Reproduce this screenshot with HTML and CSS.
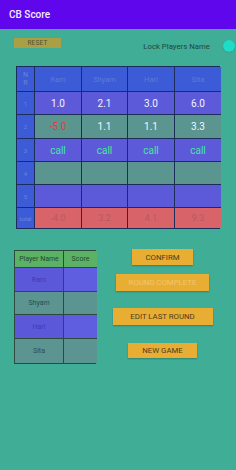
FILE: index.html
```html
<!DOCTYPE html>
<html>
<head>
<meta charset="utf-8">
<link rel="stylesheet" href="styles.css">
</head>
<body>
<div class="appbar">CB Score</div>
<div class="toolbar">
  <div class="reset">RESET</div>
  <div class="lock">
    <span class="lock-label">Lock Players Name</span>
    <span class="switch"><span class="thumb"></span></span>
  </div>
</div>

<div class="score-table">
  <div class="c hd first nr"><span>N</span><span>R</span></div>
  <div class="c hd">Ram</div>
  <div class="c hd">Shyam</div>
  <div class="c hd">Hari</div>
  <div class="c hd">Sita</div>

  <div class="c first num">1</div>
  <div class="c pu val">1.0</div>
  <div class="c pu val">2.1</div>
  <div class="c pu val">3.0</div>
  <div class="c pu val">6.0</div>

  <div class="c first num">2</div>
  <div class="c gr val neg">-5.0</div>
  <div class="c gr val">1.1</div>
  <div class="c gr val">1.1</div>
  <div class="c gr val">3.3</div>

  <div class="c first num">3</div>
  <div class="c pu call">call</div>
  <div class="c pu call">call</div>
  <div class="c pu call">call</div>
  <div class="c pu call">call</div>

  <div class="c first num">4</div>
  <div class="c gr"></div>
  <div class="c gr"></div>
  <div class="c gr"></div>
  <div class="c gr"></div>

  <div class="c first num">5</div>
  <div class="c pu"></div>
  <div class="c pu"></div>
  <div class="c pu"></div>
  <div class="c pu"></div>

  <div class="c first num">total</div>
  <div class="c tot">-4.0</div>
  <div class="c tot">3.2</div>
  <div class="c tot">4.1</div>
  <div class="c tot">9.3</div>
</div>

<div class="lower">
  <div class="player-table">
    <div class="p ph">Player Name</div>
    <div class="p ph">Score</div>
    <div class="p ppu name">Ram</div>
    <div class="p ppu2"></div>
    <div class="p pgr name">Shyam</div>
    <div class="p pgr"></div>
    <div class="p ppu name">Hari</div>
    <div class="p ppu2"></div>
    <div class="p pgr name">Sita</div>
    <div class="p pgr"></div>
  </div>
  <div class="actions">
    <div class="btn confirm">CONFIRM</div>
    <div class="btn disabled round">ROUND COMPLETE</div>
    <div class="btn edit">EDIT LAST ROUND</div>
    <div class="btn newgame">NEW GAME</div>
  </div>
</div>
</body>
</html>
```

FILE: styles.css
```css
html, body {
  margin: 0;
  padding: 0;
}
body {
  width: 236px;
  height: 470px;
  background: #40ad97;
  font-family: Roboto, "Open Sans", "Liberation Sans", sans-serif;
  overflow: hidden;
}
.appbar {
  height: 29px;
  background: #5f06ec;
  color: #f3ecff;
  font-size: 10px;
  font-weight: 500;
  display: flex;
  align-items: center;
  padding-left: 9px;
  box-sizing: border-box;
}
.toolbar {
  display: flex;
  align-items: flex-start;
  justify-content: space-between;
  margin-top: 9px;
  height: 19px;
}
.reset {
  margin-left: 14px;
  width: 47px;
  height: 10px;
  background: #a99f45;
  color: #55513a;
  font-size: 6.5px;
  display: flex;
  align-items: center;
  justify-content: center;
  letter-spacing: 0.2px;
}
.lock {
  display: flex;
  align-items: center;
  margin-top: 2px;
}
.lock-label {
  font-size: 7.8px;
  color: #22463c;
  margin-right: 13px;
}
.switch {
  width: 13px;
  height: 13px;
  display: flex;
  justify-content: flex-end;
}
.thumb {
  width: 12px;
  height: 12px;
  border-radius: 50%;
  background: #1fdcc6;
  box-shadow: 0 0.5px 1px rgba(0,0,0,0.2);
  margin-right: 1px;
}
.score-table {
  margin: 9px 0 0 16px;
  width: 204px;
  display: grid;
  grid-template-columns: 18px 47px 46px 47px 46px;
  grid-template-rows: 25px 23px 24px 23px 23px 23px 20px;
  border: 1px solid #1d2d5a;
  box-sizing: border-box;
  background: #1d2d5a;
  gap: 0;
}
.c {
  display: flex;
  align-items: center;
  justify-content: center;
  border-right: 1px solid #1d2d5a;
  border-bottom: 1px solid #1d2d5a;
  box-sizing: border-box;
  font-size: 10px;
  color: #f2f2ff;
}
.c:nth-child(5n) {
  border-right: none;
}
.c:nth-last-child(-n+5) {
  border-bottom: none;
}
.hd {
  background: #3b5bd7;
  color: #5d7bd5;
  font-size: 7.5px;
}
.first {
  background: #3b5bd7;
  color: #6a86d8;
  font-size: 6px;
}
.nr {
  flex-direction: column;
  line-height: 8px;
  font-size: 7px;
}
.num {
  font-size: 6px;
}
.pu {
  background: #5d5ad9;
}
.gr {
  background: #5b9590;
}
.val {
  color: #f4f4ff;
}
.neg {
  color: #e23c3c;
}
.call {
  color: #44e59d;
}
.tot {
  background: #d8646a;
  color: #b65a5c;
  font-size: 9px;
}
.lower {
  display: flex;
  align-items: flex-start;
  margin-top: 21px;
}
.player-table {
  margin-left: 14px;
  width: 82px;
  display: grid;
  grid-template-columns: 49px 33px;
  grid-template-rows: 17px 24px 23px 24px 24px;
  border: 1px solid #2d4a3c;
  box-sizing: border-box;
  background: #2d4a3c;
}
.p {
  display: flex;
  align-items: center;
  justify-content: center;
  box-sizing: border-box;
  border-bottom: 1px solid #2d4a3c;
  font-size: 7px;
}
.p:nth-child(odd) {
  border-right: 1px solid #2d4a3c;
}
.p:nth-last-child(-n+2) {
  border-bottom: none;
}
.ph {
  background: #5bb164;
  color: #244a30;
  font-size: 7px;
}
.ppu {
  background: #5b58d9;
  color: #3d3cb8;
}
.ppu2 {
  background: #605ee0;
}
.pgr {
  background: #5b9490;
  color: #2e4e4e;
}
.actions {
  flex: 1;
  display: flex;
  flex-direction: column;
  align-items: center;
  margin-top: -1px;
  padding-left: 15px;
  padding-right: 22px;
}
.btn {
  background: #e8ae34;
  color: #4b3d22;
  font-size: 7.8px;
  display: flex;
  align-items: center;
  justify-content: center;
  box-shadow: 0 1px 1.5px rgba(0,0,0,0.25);
}
.confirm {
  width: 61px;
  height: 16px;
}
.round {
  width: 93px;
  height: 17px;
  margin-top: 9px;
  color: #f2c66e;
}
.edit {
  width: 100px;
  height: 17px;
  margin-top: 17px;
}
.newgame {
  width: 69px;
  height: 15px;
  margin-top: 18px;
}
```
